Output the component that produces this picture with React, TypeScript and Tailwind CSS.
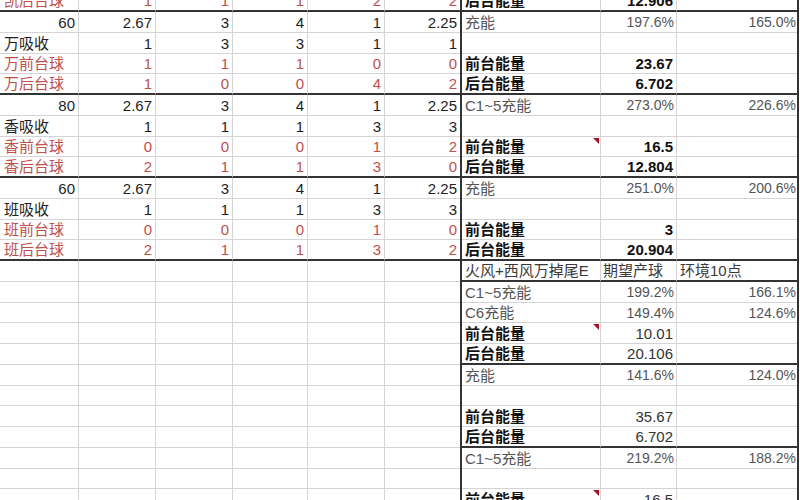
import React from "react";

type RS = "pct" | "fb" | "f" | "head" | "none";
interface Row {
  L?: string[];
  lc?: "k" | "r";
  R?: string[];
  rs?: RS;
  thick?: "all" | "right";
  tri?: boolean;
}

const rows: Row[] = [
  { L: ["凯后台球", "1", "1", "1", "2", "2"], lc: "r", R: ["后台能量", "12.906", ""], rs: "fb", thick: "all" },
  { L: ["60", "2.67", "3", "4", "1", "2.25"], lc: "k", R: ["充能", "197.6%", "165.0%"], rs: "pct" },
  { L: ["万吸收", "1", "3", "3", "1", "1"], lc: "k" },
  { L: ["万前台球", "1", "1", "1", "0", "0"], lc: "r", R: ["前台能量", "23.67", ""], rs: "fb" },
  { L: ["万后台球", "1", "0", "0", "4", "2"], lc: "r", R: ["后台能量", "6.702", ""], rs: "fb", thick: "all" },
  { L: ["80", "2.67", "3", "4", "1", "2.25"], lc: "k", R: ["C1~5充能", "273.0%", "226.6%"], rs: "pct" },
  { L: ["香吸收", "1", "1", "1", "3", "3"], lc: "k" },
  { L: ["香前台球", "0", "0", "0", "1", "2"], lc: "r", R: ["前台能量", "16.5", ""], rs: "fb", tri: true },
  { L: ["香后台球", "2", "1", "1", "3", "0"], lc: "r", R: ["后台能量", "12.804", ""], rs: "fb", thick: "all" },
  { L: ["60", "2.67", "3", "4", "1", "2.25"], lc: "k", R: ["充能", "251.0%", "200.6%"], rs: "pct" },
  { L: ["班吸收", "1", "1", "1", "3", "3"], lc: "k" },
  { L: ["班前台球", "0", "0", "0", "1", "0"], lc: "r", R: ["前台能量", "3", ""], rs: "fb" },
  { L: ["班后台球", "2", "1", "1", "3", "2"], lc: "r", R: ["后台能量", "20.904", ""], rs: "fb", thick: "all" },
  { R: ["火风+西风万掉尾E", "期望产球", "环境10点"], rs: "head", thick: "right" },
  { R: ["C1~5充能", "199.2%", "166.1%"], rs: "pct" },
  { R: ["C6充能", "149.4%", "124.6%"], rs: "pct" },
  { R: ["前台能量", "10.01", ""], rs: "f", tri: true },
  { R: ["后台能量", "20.106", ""], rs: "f", thick: "right" },
  { R: ["充能", "141.6%", "124.0%"], rs: "pct" },
  {},
  { R: ["前台能量", "35.67", ""], rs: "f" },
  { R: ["后台能量", "6.702", ""], rs: "f", thick: "right" },
  { R: ["C1~5充能", "219.2%", "188.2%"], rs: "pct" },
  {},
  { R: ["前台能量", "16.5", ""], rs: "f", tri: true },
];

const leftWidths = ["w-[79px]", "w-[77px]", "w-[77px]", "w-[75px]", "w-[77px]", "w-[75px]"];

const isNum = (s: string) => /^[0-9.]+$/.test(s);

function App() {
  const START = -8.75;
  const H = 20.75;
  return (
    <div className="w-[800px] h-[500px] overflow-hidden bg-white font-['Liberation_Sans','Noto_Sans_CJK_SC',sans-serif]">
      <div className="-mt-[9px] flex flex-col">
        {rows.map((r, i) => {
          const top = Math.round(START + i * H);
          const bot = Math.round(START + (i + 1) * H);
          const h = bot - top;
          const leftThick = r.thick === "all";
          const rightThick = r.thick === "all" || r.thick === "right";
          const lb = leftThick ? "border-b-2 border-b-[#333333]" : "border-b border-b-[#d4d4d4]";
          const rb = rightThick ? "border-b-2 border-b-[#333333]" : "border-b border-b-[#d4d4d4]";
          const L = r.L || ["", "", "", "", "", ""];
          const R = r.R || ["", "", ""];
          const red = r.lc === "r";
          return (
            <div key={i} className="flex" style={{ height: h }}>
              {L.map((t, j) => (
                <div
                  key={j}
                  className={`${leftWidths[j]} h-full shrink-0 box-border ${lb} ${j < 5 ? "border-r border-r-[#d4d4d4]" : ""} flex items-center ${
                    isNum(t) ? "justify-end pr-[3px] text-[15px]" : "justify-start pl-[4px] text-[15px]"
                  } leading-none whitespace-nowrap ${red ? "text-[#c0504d]" : "text-[#1e1e1e]"}`}
                >
                  {t}
                </div>
              ))}
              <div className="w-[2px] h-full shrink-0 bg-[#333333]" />
              {/* G */}
              <div
                className={`relative w-[139px] h-full shrink-0 box-border ${rb} border-r border-r-[#d4d4d4] flex items-center pl-[3px] leading-none whitespace-nowrap text-[15px] ${
                  r.rs === "pct" ? "text-[#555555]" : r.rs === "head" ? "text-[#3a3a3a] overflow-visible" : "text-[#111111] font-bold"
                }`}
              >
                {R[0]}
                {r.tri && (
                  <div className="absolute top-[1px] right-[1px] w-0 h-0 border-t-[6px] border-t-[#a8102c] border-l-[6px] border-l-transparent" />
                )}
              </div>
              {/* H */}
              <div
                className={`w-[76px] h-full shrink-0 box-border ${rb} border-r border-r-[#d4d4d4] flex items-center leading-none whitespace-nowrap ${
                  r.rs === "head"
                    ? "justify-start pl-[2px] text-[15px] text-[#3a3a3a]"
                    : r.rs === "pct"
                    ? "justify-end pr-[2px] text-[14px] text-[#555555]"
                    : r.rs === "fb"
                    ? "justify-end pr-[3px] text-[15px] font-bold text-[#111111]"
                    : "justify-end pr-[3px] text-[15px] text-[#333333]"
                }`}
              >
                {R[1]}
              </div>
              {/* I */}
              <div
                className={`w-[120px] h-full shrink-0 box-border ${rb} flex items-center leading-none whitespace-nowrap ${
                  r.rs === "head"
                    ? "justify-start pl-[3px] text-[15px] text-[#3a3a3a]"
                    : "justify-end pr-[1px] text-[14px] text-[#555555]"
                }`}
              >
                {R[2]}
              </div>
              <div className="w-[2px] h-full shrink-0 bg-[#333333]" />
              <div className="w-[1px] h-full shrink-0 bg-white" />
            </div>
          );
        })}
      </div>
    </div>
  );
}

export default App;
